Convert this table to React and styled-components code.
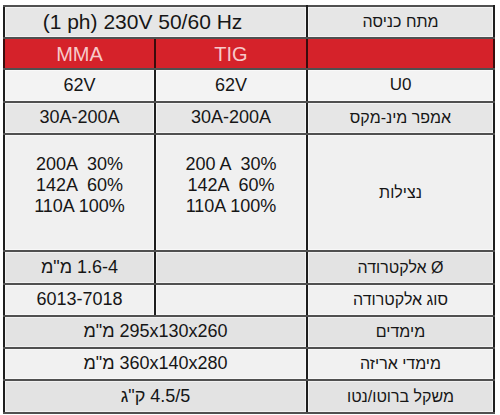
import React from "react";
import styled, { createGlobalStyle } from "styled-components";

const Global = createGlobalStyle`
  html, body { margin: 0; padding: 0; background: #ffffff; }
  body { font-family: "Liberation Sans", "DejaVu Sans", Arial, sans-serif; }
`;

const Page = styled.div`
  padding: 5px 0 0 3px;
  width: 500px;
  height: 415px;
  box-sizing: border-box;
`;

const Table = styled.table`
  width: 490px;
  border-collapse: collapse;
  table-layout: fixed;
  border: 2px solid #5c5c5c;
  color: #161616;
`;

const Row = styled.tr`
  height: ${(p) => p.$h}px;
  background: ${(p) => p.$bg};
`;

const Cell = styled.td`
  padding: 0 ${(p) => p.$padR || 0}px 0 0;
  text-align: center;
  vertical-align: middle;
  border-top: 2px solid #505050;
  border-bottom: 2px solid #505050;
  border-left: 2px solid #1e1e1e;
  border-right: 2px solid #1e1e1e;
  font-size: ${(p) => p.$size || 18}px;
  white-space: pre;
  line-height: 1.2;
  box-shadow: inset 0 0 0 1px rgba(255, 255, 255, 0.5);
`;

const Label = styled(Cell).attrs({ dir: "rtl" })`
  font-size: 16px;
`;

const RedCell = styled(Cell)`
  background: #d5222a;
  color: #f7caca;
  font-size: 20px;
  border-left-color: #3a0c0c;
  border-right-color: #3a0c0c;
  box-shadow: none;
`;

const DutyLines = styled.div`
  display: flex;
  flex-direction: column;
  align-items: center;
  line-height: 21px;
  font-size: 18px;
  padding-bottom: 14px;
`;

const Duty = ({ lines }) => (
  <DutyLines>
    {lines.map((l) => (
      <span key={l}>{l}</span>
    ))}
  </DutyLines>
);

export default function App() {
  return (
    <Page>
      <Global />
      <Table>
        <colgroup>
          <col style={{ width: 151 }} />
          <col style={{ width: 152 }} />
          <col style={{ width: 187 }} />
        </colgroup>
        <tbody>
          <Row $h={32} $bg="#e6e6e6">
            <Cell colSpan={2} $size={21} $padR={26}>(1 ph) 230V 50/60 Hz</Cell>
            <Label>מתח כניסה</Label>
          </Row>
          <Row $h={31} $bg="#d5222a">
            <RedCell>MMA</RedCell>
            <RedCell>TIG</RedCell>
            <RedCell />
          </Row>
          <Row $h={33} $bg="#f3f3f3">
            <Cell>62V</Cell>
            <Cell>62V</Cell>
            <Cell $size={17}>U0</Cell>
          </Row>
          <Row $h={32} $bg="#e6e6e6">
            <Cell>30A-200A</Cell>
            <Cell>30A-200A</Cell>
            <Label>אמפר מינ-מקס</Label>
          </Row>
          <Row $h={117} $bg="#f0f0f0">
            <Cell>
              <Duty lines={["200A  30%", "142A  60%", "110A 100%"]} />
            </Cell>
            <Cell>
              <Duty lines={["200 A  30%", "142A  60%", "110A 100%"]} />
            </Cell>
            <Label>נצילות</Label>
          </Row>
          <Row $h={33} $bg="#e3e3e3">
            <Cell dir="rtl">1.6-4 מ"מ</Cell>
            <Cell />
            <Label>Ø אלקטרודה</Label>
          </Row>
          <Row $h={32} $bg="#f1f1f1">
            <Cell>6013-7018</Cell>
            <Cell />
            <Label>סוג אלקטרודה</Label>
          </Row>
          <Row $h={32} $bg="#e3e3e3">
            <Cell colSpan={2} dir="rtl">295x130x260 מ"מ</Cell>
            <Label>מימדים</Label>
          </Row>
          <Row $h={32} $bg="#f1f1f1">
            <Cell colSpan={2} dir="rtl">360x140x280 מ"מ</Cell>
            <Label>מימדי אריזה</Label>
          </Row>
          <Row $h={33} $bg="#e3e3e3">
            <Cell colSpan={2} dir="rtl">4.5/5 ק"ג</Cell>
            <Label>משקל ברוטו/נטו</Label>
          </Row>
        </tbody>
      </Table>
    </Page>
  );
}
